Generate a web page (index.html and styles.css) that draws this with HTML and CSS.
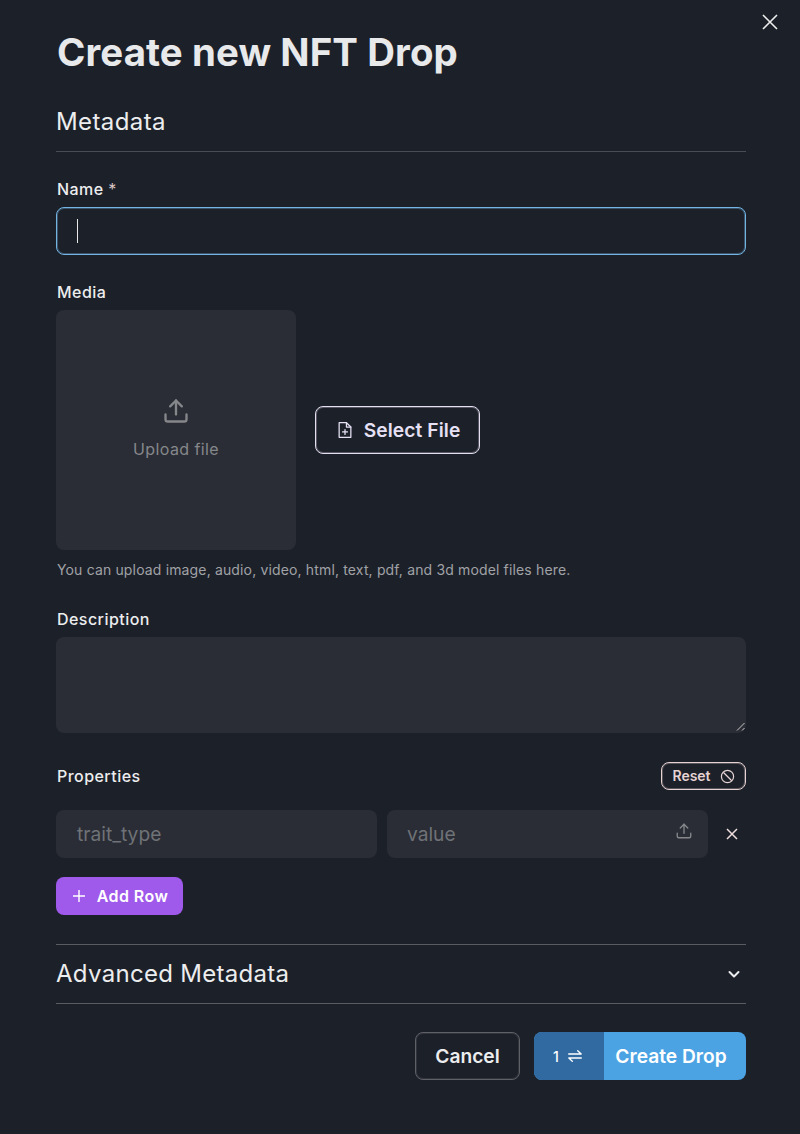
FILE: index.html
```html
<!DOCTYPE html>
<html lang="en">
<head>
<meta charset="utf-8">
<title>Create new NFT Drop</title>
<link rel="stylesheet" href="styles.css">
</head>
<body>
<div class="modal">
  <button class="close" aria-label="Close">
    <svg width="16" height="16" viewBox="0 0 16 16" fill="none" stroke="currentColor" stroke-width="1.6"><path d="M1 1l14 14M15 1L1 15"/></svg>
  </button>
  <h1 class="title">Create new NFT Drop</h1>
  <h2 class="section-title">Metadata</h2>
  <div class="divider"></div>

  <label class="label label-name">Name <span class="req">*</span></label>
  <div class="name-input"><span class="caret"></span></div>

  <label class="label label-media">Media</label>
  <div class="media-row">
    <div class="upload-box">
      <svg class="upload-icon" width="28" height="28" viewBox="0 0 24 24" fill="none" stroke="currentColor" stroke-width="2" stroke-linecap="round" stroke-linejoin="round"><path d="M3 15v4a2 2 0 0 0 2 2h14a2 2 0 0 0 2-2v-4"/><path d="M17 8l-5-5-5 5"/><path d="M12 3v12"/></svg>
      <span class="upload-text">Upload file</span>
    </div>
    <button class="select-file">
      <svg width="14" height="16" viewBox="1.200 0.800 13.600 16.400" fill="none" stroke="currentColor" stroke-width="1.300" stroke-linejoin="round" stroke-linecap="round"><path d="M2 1.500h7.500L14 6v10.500H2z"/><path d="M9.500 1.500V6H14"/><path d="M8 8.500v5M5.500 11h5"/></svg>
      <span>Select File</span>
    </button>
  </div>
  <p class="help">You can upload image, audio, video, html, text, pdf, and 3d model files here.</p>

  <label class="label label-desc">Description</label>
  <div class="textarea">
    <svg class="resize" width="10" height="10" viewBox="0 0 10 10" fill="none" stroke="#c8c8c8" stroke-width="1"><path d="M1 8.500L8.500 1M6 8.500L8.500 6"/></svg>
  </div>

  <div class="props-head">
    <span class="label-inline">Properties</span>
    <button class="reset">
      <span>Reset</span>
      <svg width="15" height="15" viewBox="0 0 16 16" fill="none" stroke="currentColor" stroke-width="1.300"><circle cx="8" cy="8" r="6.500"/><path d="M3.500 3.500l9 9"/></svg>
    </button>
  </div>

  <div class="prop-row">
    <div class="field field-trait"><span>trait_type</span></div>
    <div class="field field-value">
      <span>value</span>
      <svg width="18" height="18" viewBox="0 0 24 24" fill="none" stroke="currentColor" stroke-width="1.800" stroke-linecap="round" stroke-linejoin="round"><path d="M3 15v4a2 2 0 0 0 2 2h14a2 2 0 0 0 2-2v-4"/><path d="M17 8l-5-5-5 5"/><path d="M12 3v12"/></svg>
    </div>
    <button class="row-remove" aria-label="Remove">
      <svg width="12" height="12" viewBox="0 0 12 12" fill="none" stroke="currentColor" stroke-width="1.500"><path d="M1 1l10 10M11 1L1 11"/></svg>
    </button>
  </div>

  <button class="add-row">
    <svg width="12" height="12" viewBox="0 0 12 12" fill="none" stroke="currentColor" stroke-width="1.400"><path d="M6 0v12M0 6h12"/></svg>
    <span>Add Row</span>
  </button>

  <div class="advanced">
    <span>Advanced Metadata</span>
    <svg class="chevron" width="14" height="14" viewBox="0 0 14 14" fill="none" stroke="currentColor" stroke-width="2" stroke-linecap="round" stroke-linejoin="round"><path d="M2.500 5l4.500 4.500L11.500 5"/></svg>
  </div>

  <div class="actions">
    <button class="cancel">Cancel</button>
    <button class="create">
      <span class="create-count">1
        <svg width="14" height="12" viewBox="0 0 14 12" fill="none" stroke="currentColor" stroke-width="1.300" stroke-linecap="round" stroke-linejoin="round"><path d="M0.700 4h12.500L9.700 0.700M13.300 8H0.800l3.500 3.300"/></svg>
      </span>
      <span class="create-label">Create Drop</span>
    </button>
  </div>
</div>
</body>
</html>
```
FILE: styles.css
```css
* { box-sizing: border-box; }
html, body { margin: 0; padding: 0; }
body {
  background: #1c2029;
  font-family: Inter, "Liberation Sans", sans-serif;
  color: #f0f0f2;
  width: 800px;
  height: 1134px;
  overflow: hidden;
}
button { font-family: inherit; cursor: pointer; background: none; border: none; padding: 0; color: inherit; }
.modal { position: relative; padding: 32px 54px 0 56px; height: 1134px; }
.close { position: absolute; top: 14px; right: 22px; width: 16px; height: 16px; color: #eeeeee; display: flex; }
.title { margin: 0; padding-left: 1px; font-size: 38.4px; line-height: 40px; font-weight: 700; letter-spacing: 0.1px; color: #e8e9ea; }
.section-title { margin: 34px 0 0; font-size: 24px; line-height: 32px; font-weight: 400; letter-spacing: 0.4px; color: #ecedee; }
.divider { height: 1px; background: #4a4d54; margin-top: 13px; }
.label, .label-inline { display: block; padding-left: 1px; font-size: 16px; line-height: 24px; font-weight: 500; letter-spacing: 0.45px; color: #ecedee; }
.label-name { margin-top: 25px; }
.req { color: #d9c6c6; font-weight: 400; }
.name-input { margin-top: 6px; height: 48px; border: 1px solid #73b4e3; box-shadow: inset 0 0 0 1px rgba(115, 180, 227, 0.35); border-radius: 8px; display: flex; align-items: center; padding-left: 20px; }
.caret { width: 1px; height: 24px; background: #e8e8e8; }
.label-media { margin-top: 25px; }
.media-row { margin-top: 6px; display: flex; align-items: center; gap: 19px; }
.upload-box { width: 240px; height: 240px; padding-bottom: 3px; background: #2a2d35; border-radius: 8px; display: flex; flex-direction: column; align-items: center; justify-content: center; gap: 12px; color: #85878b; }
.upload-text { font-size: 16px; line-height: 24px; letter-spacing: 0.4px; }
.select-file { width: 165px; height: 48px; padding-left: 3px; border: 1px solid #e4def0; box-shadow: inset 0 0 0 1px rgba(228, 222, 240, 0.3); border-radius: 8px; display: flex; align-items: center; justify-content: center; gap: 12px; font-size: 19.2px; line-height: 28px; font-weight: 600; letter-spacing: 0.1px; color: #e6e0f4; }
.help { margin: 10px 0 0; padding-left: 1px; font-size: 14px; line-height: 20px; color: #a0a2a6; letter-spacing: 0.15px; }
.label-desc { margin-top: 27px; }
.textarea { position: relative; margin-top: 6px; height: 96px; background: #2a2d35; border-radius: 8px; }
.resize { position: absolute; right: 0; bottom: 1px; }
.props-head { margin-top: 29px; height: 28px; display: flex; align-items: center; justify-content: space-between; }
.reset { width: 85px; height: 28px; border: 1px solid #e6d2d2; box-shadow: inset 0 0 0 1px rgba(230, 210, 210, 0.3); border-radius: 8px; display: flex; align-items: center; justify-content: center; gap: 9px; font-size: 14px; line-height: 20px; font-weight: 600; color: #e6d4d4; }
.prop-row { margin-top: 20px; display: flex; align-items: center; }
.field { height: 48px; background: #2a2d35; border-radius: 8px; display: flex; align-items: center; justify-content: space-between; padding: 0 15px 0 20px; font-size: 19.2px; color: #6f7277; }
.field-trait { width: 321px; margin-right: 10px; padding-left: 21px; }
.field-value { width: 321px; }
.field-value svg { color: #85878b; margin-top: -6px; }
.row-remove { width: 38px; height: 48px; display: flex; align-items: center; justify-content: flex-end; padding-right: 8px; color: #efdcdc; }
.add-row { margin-top: 19px; width: 127px; height: 38px; padding-left: 2px; background: #9f5aeb; border-radius: 8px; display: flex; align-items: center; justify-content: center; gap: 12px; font-size: 16px; line-height: 24px; font-weight: 600; letter-spacing: 0.45px; color: #ffffff; }
.advanced { margin-top: 29px; height: 60px; padding: 0 5px 2px 0; border-top: 1px solid #5a5c62; border-bottom: 1px solid #5a5c62; display: flex; align-items: center; justify-content: space-between; font-size: 24px; letter-spacing: 0.3px; color: #ecedee; }
.chevron { margin-top: 2px; }
.actions { margin-top: 28px; display: flex; justify-content: flex-end; gap: 14px; }
.cancel { width: 105px; height: 48px; border: 1px solid #5f6167; box-shadow: inset 0 0 0 1px rgba(95, 97, 103, 0.3); border-radius: 8px; font-size: 19.2px; line-height: 28px; font-weight: 600; color: #ecedee; }
.create { width: 212px; height: 48px; border-radius: 8px; overflow: hidden; display: flex; background: #4ba3e3; color: #ffffff; font-size: 19.2px; font-weight: 600; }
.create-count { width: 70px; height: 48px; padding-right: 3px; background: #306aa1; display: flex; align-items: center; justify-content: center; gap: 9px; font-size: 14px; font-weight: 500; }
.create-label { flex: 1; height: 48px; line-height: 48px; text-align: center; padding-right: 8px; }
```
